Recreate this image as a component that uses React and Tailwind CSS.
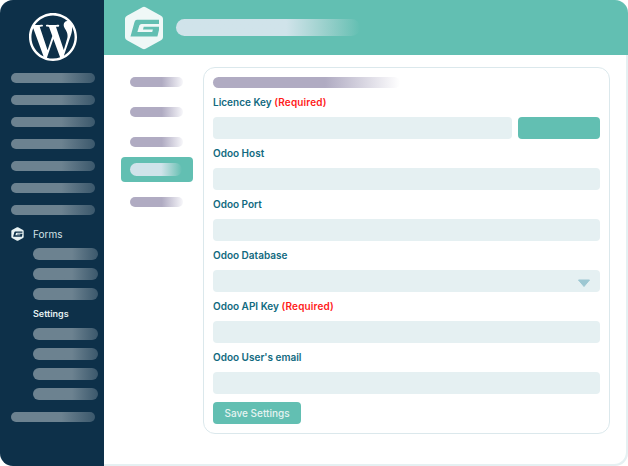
import { SiWordpress } from "react-icons/si";

const font = { fontFamily: '"Inter","Liberation Sans",sans-serif' };

function Bar({ className }) {
  return <div className={`rounded-full ${className}`} />;
}

function GfLogo({ h, w, bg, fg }) {
  return (
    <svg width={w} height={h} viewBox="0 0 40 46" preserveAspectRatio="none" className="block">
      <path d="M20 0.8 a3 3 0 0 1 1.6 .4 L37 10.2 a3.6 3.6 0 0 1 2 3.2 V32.6 a3.6 3.6 0 0 1 -2 3.2 L21.6 44.8 a3.2 3.2 0 0 1 -3.2 0 L3 35.8 a3.6 3.6 0 0 1 -2 -3.2 V13.4 a3.6 3.6 0 0 1 2 -3.2 L18.4 1.2 a3 3 0 0 1 1.6 -.4z" fill={bg} />
      <path d="M13 14.5 H35 V18.8 H17.5 a2.4 2.4 0 0 0 -2.2 1.7 L13.4 27.2 H28.2 L28.9 24.6 H19 L19.7 21.8 H35 V25 L33.4 32 H6.5 L10.6 16.5 a3 3 0 0 1 2.4 -2z" fill={fg} />
    </svg>
  );
}

function SideBar() {
  return <Bar className="h-[10px] w-[84px] bg-gradient-to-r from-[#6c8290] from-60% to-[#3b586c]" />;
}
function SubBar() {
  return <Bar className="h-3 w-[65px] bg-gradient-to-r from-[#6c8290] from-60% to-[#3b586c]" />;
}
function TabBar() {
  return <Bar className="h-[10px] w-[53px] bg-gradient-to-r from-[#b0abc2] from-60% to-[#f7f7fa]" />;
}

function Label({ children, req }) {
  return (
    <div className="h-4 text-[10px] leading-4 font-semibold text-[#116a80]">
      {children}
      {req && <span className="text-[#ff1a1a] tracking-[0.15px]"> (Required)</span>}
    </div>
  );
}

function Input({ children }) {
  return <div className="relative h-[22px] rounded-[4px] bg-[#e5f0f2]">{children}</div>;
}

function Field({ label, req, children }) {
  return (
    <div className="flex flex-col gap-[7px]">
      <Label req={req}>{label}</Label>
      {children || <Input />}
    </div>
  );
}

export default function App() {
  return (
    <div className="w-[628px] h-[466px] bg-white overflow-hidden" style={font}>
      <div className="flex h-[466px] w-[628px] rounded-[13px] overflow-hidden bg-[#e5f0f2]">
        <aside className="w-[104px] shrink-0 bg-[#0d3049] flex flex-col">
          <div className="flex pt-[13px] pb-[12px] pl-[29px] text-white"><SiWordpress size={48} /></div>
          <div className="flex flex-col gap-3 pl-[11px]">
            {[0, 1, 2, 3, 4, 5, 6].map((i) => <SideBar key={i} />)}
          </div>
          <div className="flex items-center pl-[11px] h-4 mt-[11px] gap-[9px]">
            <GfLogo w={13} h={14} bg="#e8f3f4" fg="#0d3049" />
            <span className="text-[10px] leading-4 text-[#d5e3e7]">Forms</span>
          </div>
          <div className="flex flex-col gap-2 pl-[33px] mt-[6px]">
            <SubBar /><SubBar /><SubBar />
            <div className="h-3 text-[9px] leading-3 font-semibold text-[#e5f0f2]">Settings</div>
            <SubBar /><SubBar /><SubBar /><SubBar />
          </div>
          <div className="pl-[11px] mt-3"><SideBar /></div>
        </aside>
        <div className="flex-1 mb-[2px] mr-[2px] rounded-br-[12px] bg-white flex flex-col">
          <header className="h-[55px] shrink-0 -mr-[2px] bg-[#62bfb2] flex items-center pl-[20px] gap-[12px]">
            <GfLogo w={40} h={44} bg="#eff8f7" fg="#62bfb2" />
            <Bar className="h-[17px] w-[184px] bg-gradient-to-r from-[#d0e3ea] from-60% to-[#62bfb2]" />
          </header>
          <div className="flex flex-1 pt-3">
            <nav className="w-[99px] shrink-0 flex flex-col pl-[17px] pt-[10px]">
              <div className="pl-[9px] flex flex-col gap-5">
                <TabBar /><TabBar /><TabBar />
              </div>
              <div className="mt-[10px] w-[72px] h-[25px] rounded-[4px] bg-[#62bfb2] flex items-center pl-[9px]">
                <Bar className="h-[13px] w-[52px] bg-gradient-to-r from-[#d0e3ea] from-60% to-[#62bfb2]" />
              </div>
              <div className="pl-[9px] mt-[15px]"><TabBar /></div>
            </nav>
            <main className="w-[407px] h-[367px] rounded-[12px] border border-[#dbe8ec] px-[9px] pt-[9px] flex flex-col">
              <Bar className="h-[11px] w-[187px] bg-gradient-to-r from-[#b0abc2] from-60% to-[#ffffff]" />
              <div className="mt-[6px] flex flex-col gap-[6px]">
                <Field label="Licence Key" req>
                  <div className="flex gap-[6px]">
                    <div className="flex-1"><Input /></div>
                    <div className="w-[82px] h-[22px] rounded-[4px] bg-[#62bfb2]" />
                  </div>
                </Field>
                <Field label="Odoo Host" />
                <Field label="Odoo Port" />
                <Field label="Odoo Database">
                  <Input>
                    <svg width="14" height="9" viewBox="0 0 14 9" className="absolute right-[9px] top-[9px]">
                      <path d="M1.5 1 H12.5 L7 7.5z" fill="#9dc7d2" stroke="#9dc7d2" strokeLinejoin="round" />
                    </svg>
                  </Input>
                </Field>
                <Field label="Odoo API Key" req />
                <Field label="Odoo User's email" />
              </div>
              <div className="mt-2 w-[88px] h-[22px] rounded-[4px] bg-[#62bfb2] text-center text-[10px] leading-[22px] font-medium text-[#e5f3f1]">Save Settings</div>
            </main>
          </div>
        </div>
      </div>
    </div>
  );
}
